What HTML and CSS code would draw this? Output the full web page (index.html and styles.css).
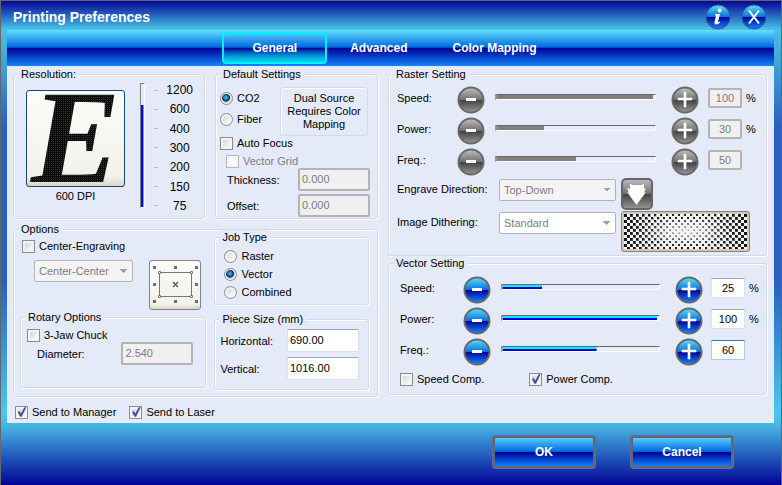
FILE: index.html
```html
<!DOCTYPE html>
<html lang="en">

<head>
    <meta charset="UTF-8">
    <meta name="viewport" content="width=device-width, initial-scale=1.0">
    <title>Printing Preferences</title>
    <link rel="stylesheet" href="styles.css">
</head>

<body>

    <header class="titlebar">
        <h1>Printing Preferences</h1>
        <button type="button" class="orb" aria-label="About">
            <svg width="26" height="26" viewBox="0 0 26 26">
                <use href="#orb-blue"/>
                <circle cx="14.600" cy="6.500" r="1.900" fill="#fff"/>
                <path d="M10 10h5l-2 7.500q-.2 1.300 1.500 0l.8.6q-1.500 2.400-3.700 2.400-2.700 0-2-2.900l1.400-5.500q.2-.9-1-.9z" fill="#fff"/>
            </svg>
        </button>
        <button type="button" class="orb" aria-label="Close">
            <svg width="26" height="26" viewBox="0 0 26 26">
                <use href="#orb-blue"/>
                <path d="M8 6.500l10 13M18 6.500l-10 13" stroke="#fff" stroke-width="2"/>
            </svg>
        </button>
    </header>

    <nav class="tabs">
        <button type="button" class="tab active">General</button>
        <button type="button" class="tab">Advanced</button>
        <button type="button" class="tab">Color Mapping</button>
    </nav>

    <main class="panel">
        <div class="columns">
            <div class="left">
                <div class="top-row">
                    <fieldset class="resolution">
                        <legend>Resolution:</legend>
                        <div class="preview">
                            <button type="button" class="preview-button" aria-label="Resolution preview">
                                <svg width="97" height="95" viewBox="0 0 97 95">
                                    <defs>
                                        <pattern id="dots" width="2" height="2" patternUnits="userSpaceOnUse">
                                            <rect width="2" height="2" fill="#0c0c0c"/>
                                            <rect width="1" height="1" fill="#343434"/>
                                        </pattern>
                                    </defs>
                                    <text class="preview-letter" x="4" y="91" fill="url(#dots)">E</text>
                                </svg>
                            </button>
                            <output for="dpi">600 DPI</output>
                        </div>
                        <input type="range" id="dpi" class="vertical" aria-label="Resolution" min="0" max="6" value="5" style="--fill: 83%">
                        <ul class="scale">
                            <li>1200</li>
                            <li>600</li>
                            <li>400</li>
                            <li>300</li>
                            <li>200</li>
                            <li>150</li>
                            <li>75</li>
                        </ul>
                    </fieldset>

                    <fieldset class="defaults">
                        <legend>Default Settings</legend>
                        <div class="source">
                            <div class="source-options">
                                <label><input type="radio" name="source" checked>CO2</label>
                                <label><input type="radio" name="source">Fiber</label>
                            </div>
                            <p class="notice">Dual Source Requires Color Mapping</p>
                        </div>
                        <label><input type="checkbox">Auto Focus</label>
                        <label class="sub disabled"><input type="checkbox" disabled>Vector Grid</label>
                        <div class="field">
                            <label for="thickness">Thickness:</label>
                            <input type="text" id="thickness" value="0.000" disabled>
                        </div>
                        <div class="field">
                            <label for="offset">Offset:</label>
                            <input type="text" id="offset" value="0.000" disabled>
                        </div>
                    </fieldset>
                </div>

                <fieldset class="options">
                    <legend>Options</legend>
                    <div class="options-left">
                        <label class="centering"><input type="checkbox">Center-Engraving</label>
                        <div class="position">
                            <select aria-label="Center position" disabled>
                                <option>Center-Center</option>
                            </select>
                            <button type="button" class="anchor" aria-label="Anchor point">
                                <svg width="48" height="46" viewBox="0 0 48 46">
                                    <path d="M2 4h3v3H2zM23 4h3v3h-3zM44 4h3v3h-3zM2 21h3v3H2zM44 21h3v3h-3zM2 38h3v3H2zM23 38h3v3h-3zM44 38h3v3h-3z" fill="#707070"/>
                                    <path d="M8.500 10.500h32v24h-32z" fill="none" stroke="#777"/>
                                    <path d="M7.500 9.500h2v2h-2zM39.500 9.500h2v2h-2zM7.500 33.500h2v2h-2zM39.500 33.500h2v2h-2z" fill="#fff" stroke="#777"/>
                                    <path d="M22 20l5 5M27 20l-5 5" stroke="#555" stroke-width="1.300"/>
                                </svg>
                            </button>
                        </div>
                        <fieldset class="rotary">
                            <legend>Rotary Options</legend>
                            <label><input type="checkbox">3-Jaw Chuck</label>
                            <div class="field">
                                <label for="diameter">Diameter:</label>
                                <input type="text" id="diameter" value="2.540" disabled>
                            </div>
                        </fieldset>
                    </div>
                    <div class="options-right">
                        <fieldset class="job">
                            <legend>Job Type</legend>
                            <label><input type="radio" name="job">Raster</label>
                            <label><input type="radio" name="job" checked>Vector</label>
                            <label><input type="radio" name="job">Combined</label>
                        </fieldset>
                        <fieldset class="piece">
                            <legend>Piece Size (mm)</legend>
                            <div class="field">
                                <label for="horizontal">Horizontal:</label>
                                <input type="text" id="horizontal" value="690.00">
                            </div>
                            <div class="field">
                                <label for="vertical">Vertical:</label>
                                <input type="text" id="vertical" value="1016.00">
                            </div>
                        </fieldset>
                    </div>
                </fieldset>
            </div>

            <div class="right">
                <fieldset class="raster">
                    <legend>Raster Setting</legend>
                    <div class="level">
                        <label for="raster-speed">Speed:</label>
                        <button type="button" class="orb" aria-label="Decrease raster speed"><svg width="28" height="28"><use href="#minus-gray"/></svg></button>
                        <input type="range" aria-label="Raster speed" value="100" disabled style="--fill: 99%">
                        <button type="button" class="orb" aria-label="Increase raster speed"><svg width="28" height="28"><use href="#plus-gray"/></svg></button>
                        <input type="text" id="raster-speed" value="100" disabled>
                        <span>%</span>
                    </div>
                    <div class="level">
                        <label for="raster-power">Power:</label>
                        <button type="button" class="orb" aria-label="Decrease raster power"><svg width="28" height="28"><use href="#minus-gray"/></svg></button>
                        <input type="range" aria-label="Raster power" value="30" disabled style="--fill: 30%">
                        <button type="button" class="orb" aria-label="Increase raster power"><svg width="28" height="28"><use href="#plus-gray"/></svg></button>
                        <input type="text" id="raster-power" value="30" disabled>
                        <span>%</span>
                    </div>
                    <div class="level">
                        <label for="raster-freq">Freq.:</label>
                        <button type="button" class="orb" aria-label="Decrease raster frequency"><svg width="28" height="28"><use href="#minus-gray"/></svg></button>
                        <input type="range" aria-label="Raster frequency" value="50" disabled style="--fill: 50%">
                        <button type="button" class="orb" aria-label="Increase raster frequency"><svg width="28" height="28"><use href="#plus-gray"/></svg></button>
                        <input type="text" id="raster-freq" value="50" disabled>
                    </div>
                    <div class="choice">
                        <label for="direction">Engrave Direction:</label>
                        <select id="direction" disabled>
                            <option>Top-Down</option>
                        </select>
                        <button type="button" class="arrow" aria-label="Engrave downwards">
                            <svg width="32" height="32" viewBox="0 0 32 32">
                                <rect x="1" y="1" width="30" height="30" rx="4" fill="url(#gray)" stroke="#666" stroke-width="2"/>
                                <path d="M9 6l3 1h8l3-1v5l2-1-2 5 2-1-9.500 13L6 14l2 1-2-5 3 1z" fill="#fff"/>
                            </svg>
                        </button>
                    </div>
                    <div class="choice">
                        <label for="dithering">Image Dithering:</label>
                        <select id="dithering" class="open" disabled>
                            <option>Standard</option>
                        </select>
                        <button type="button" class="dither" aria-label="Dithering preview">
                            <svg width="123" height="35" viewBox="0 0 123 35">
                                <defs>
                                    <pattern id="small" width="6" height="6" patternUnits="userSpaceOnUse">
                                        <path d="M1 1h1v1H1zM4 4h1v1H4z" fill="#444"/>
                                    </pattern>
                                    <pattern id="medium" width="6" height="6" patternUnits="userSpaceOnUse">
                                        <path d="M0 0h2v2H0zM3 3h2v2H3z" fill="#222"/>
                                    </pattern>
                                    <pattern id="large" width="6" height="6" patternUnits="userSpaceOnUse">
                                        <path d="M0 0h3v3H0zM3 3h3v3H3z" fill="#111"/>
                                    </pattern>
                                    <radialGradient id="fade" cx=".5" cy=".5" r=".5">
                                        <stop offset="0" stop-color="#000"/>
                                        <stop offset=".8" stop-color="#fff"/>
                                    </radialGradient>
                                    <linearGradient id="edges">
                                        <stop offset="0" stop-color="#fff"/>
                                        <stop offset=".35" stop-color="#000"/>
                                        <stop offset=".65" stop-color="#000"/>
                                        <stop offset="1" stop-color="#fff"/>
                                    </linearGradient>
                                    <mask id="fade-mask"><rect width="123" height="35" fill="url(#fade)"/></mask>
                                    <mask id="edge-mask"><rect width="123" height="35" fill="url(#edges)"/></mask>
                                </defs>
                                <rect width="123" height="35" fill="#f2f2f2"/>
                                <rect width="123" height="35" fill="url(#small)" opacity=".5"/>
                                <rect width="123" height="35" fill="url(#medium)" mask="url(#fade-mask)"/>
                                <rect width="123" height="35" fill="url(#large)" mask="url(#edge-mask)"/>
                            </svg>
                        </button>
                    </div>
                </fieldset>

                <fieldset class="vector">
                    <legend>Vector Setting</legend>
                    <div class="level">
                        <label for="vector-speed">Speed:</label>
                        <button type="button" class="orb" aria-label="Decrease vector speed"><svg width="28" height="28"><use href="#minus-blue"/></svg></button>
                        <input type="range" aria-label="Vector speed" value="25" style="--fill: 25%">
                        <button type="button" class="orb" aria-label="Increase vector speed"><svg width="28" height="28"><use href="#plus-blue"/></svg></button>
                        <input type="text" id="vector-speed" value="25">
                        <span>%</span>
                    </div>
                    <div class="level">
                        <label for="vector-power">Power:</label>
                        <button type="button" class="orb" aria-label="Decrease vector power"><svg width="28" height="28"><use href="#minus-blue"/></svg></button>
                        <input type="range" aria-label="Vector power" value="100" style="--fill: 99%">
                        <button type="button" class="orb" aria-label="Increase vector power"><svg width="28" height="28"><use href="#plus-blue"/></svg></button>
                        <input type="text" id="vector-power" value="100">
                        <span>%</span>
                    </div>
                    <div class="level">
                        <label for="vector-freq">Freq.:</label>
                        <button type="button" class="orb" aria-label="Decrease vector frequency"><svg width="28" height="28"><use href="#minus-blue"/></svg></button>
                        <input type="range" aria-label="Vector frequency" value="60" style="--fill: 60%">
                        <button type="button" class="orb" aria-label="Increase vector frequency"><svg width="28" height="28"><use href="#plus-blue"/></svg></button>
                        <input type="text" id="vector-freq" class="current" value="60">
                    </div>
                    <div class="comp">
                        <label><input type="checkbox">Speed Comp.</label>
                        <label><input type="checkbox" checked>Power Comp.</label>
                    </div>
                </fieldset>
            </div>
        </div>

        <div class="send">
            <label><input type="checkbox" checked>Send to Manager</label>
            <label><input type="checkbox" checked>Send to Laser</label>
        </div>
    </main>

    <footer class="actions">
        <button type="button" class="action">OK</button>
        <button type="button" class="action">Cancel</button>
    </footer>

    <!-- shared button shapes -->
    <svg class="shapes" width="0" height="0" aria-hidden="true">
        <defs>
            <linearGradient id="blue" x1="0" y1="0" x2="0" y2="1">
                <stop offset="0" stop-color="#5ce0f4"/>
                <stop offset=".49" stop-color="#0870e0"/>
                <stop offset=".5" stop-color="#000098"/>
                <stop offset="1" stop-color="#1488ff"/>
            </linearGradient>
            <linearGradient id="gray" x1="0" y1="0" x2="0" y2="1">
                <stop offset="0" stop-color="#c0c0c0"/>
                <stop offset=".49" stop-color="#707070"/>
                <stop offset=".5" stop-color="#404040"/>
                <stop offset="1" stop-color="#989898"/>
            </linearGradient>
            <g id="orb-blue">
                <circle cx="13" cy="13" r="12" fill="url(#blue)" stroke="#40548c"/>
            </g>
            <g id="round-blue">
                <circle cx="14" cy="14" r="12.500" fill="url(#blue)" stroke="#686868" stroke-width="2"/>
            </g>
            <g id="round-gray">
                <circle cx="14" cy="14" r="12.500" fill="url(#gray)" stroke="#686868" stroke-width="2"/>
            </g>
            <path id="minus" d="M9 12h10v3H9z" fill="#fff"/>
            <path id="plus" d="M7 12h6V6h2v6h6v2h-6v7h-2v-7H7z" fill="#fff" stroke="#fff" stroke-width=".6"/>
            <g id="minus-blue"><use href="#round-blue"/><use href="#minus"/></g>
            <g id="plus-blue"><use href="#round-blue"/><use href="#plus"/></g>
            <g id="minus-gray"><use href="#round-gray"/><use href="#minus"/></g>
            <g id="plus-gray"><use href="#round-gray"/><use href="#plus"/></g>
        </defs>
    </svg>

</body>

</html>
```

FILE: styles.css
```css
* {
    box-sizing: border-box;
}

body {
    margin: 0;
    min-height: 100vh;
    display: flex;
    flex-direction: column;
    border: 1px solid #666;
    background: linear-gradient(#000094 0%, #48c0e6 6%, #3fa4d8 13%, #2860c0 26%, #2860c0 58%, #4ac8ec 85%, #44b0e0 88%, #000094 100%);
    font-family: "Liberation Sans", Arial, sans-serif;
    font-size: 11px;
    line-height: 14px;
    color: #000;
}

button,
input,
select {
    font: inherit;
    color: inherit;
    margin: 0;
}

button {
    padding: 0;
    border: none;
    background: none;
    cursor: pointer;
}

svg {
    display: block;
}

.shapes {
    position: absolute;
}

/* title and tabs */

.titlebar {
    height: 29px;
    display: flex;
    align-items: center;
    gap: 10px;
    padding: 2px 14px 0 12px;
}

.titlebar h1 {
    flex: 1;
    margin: 0;
    font-size: 14px;
    font-weight: bold;
    color: #fff;
}

.tabs {
    height: 36px;
    display: flex;
    justify-content: center;
    align-items: flex-start;
    gap: 1px;
    margin: 0 7px 0 6px;
    padding-top: 2px;
    background: linear-gradient(#64e0ff, #0068e0 48%, #000094 50%, #0a50d0 80%, #1484ff);
}

.tab {
    height: 32px;
    padding: 0 20px;
    border: 2px solid transparent;
    border-radius: 4px;
    font-size: 12px;
    font-weight: bold;
    color: #fff;
}

.tab.active {
    padding: 0 28px;
    border-color: #00f0ff;
    background: linear-gradient(#64e0ff00 50%, #00d8e8);
}

/* panel */

.panel {
    flex: 1;
    margin: 0 7px 0 6px;
    padding: 1px 7px 0 6px;
    background: #e4eaf7;
}

.columns {
    display: grid;
    grid-template-columns: 365fr 379fr;
    gap: 10px;
}

.left {
    display: flex;
    flex-direction: column;
    gap: 3px;
}

.top-row {
    display: grid;
    grid-template-columns: 192fr 163fr;
    gap: 10px;
}

fieldset {
    --pad: 6px;
    min-width: 0;
    margin: 0;
    padding: 0 0 0 var(--pad);
    border: 1px solid #d0dce2;
    border-radius: 3px;
    box-shadow: 1px 1px 0 #fff, inset 1px 1px 0 #fff;
}

/* keeps every legend at the same distance from its frame */
legend {
    margin-left: calc(4px - var(--pad));
    padding: 0 3px;
    background: #e4eaf7;
}

fieldset label {
    white-space: nowrap;
}

label:has(input) {
    display: flex;
    align-items: center;
    gap: 4px;
}

.disabled {
    color: #7d7d7d;
}

input[type="text"] {
    width: 72px;
    height: 23px;
    padding: 0 2px 2px;
    border: 1px solid #dce0e8;
    border-top-color: #a4a8b0;
    background: #fff;
}

input[type="text"]:disabled {
    border: 2px solid #b4b4b4;
    border-radius: 2px;
    background: #f0f0f0;
    color: #7d7d7d;
}

input[type="checkbox"],
input[type="radio"] {
    appearance: none;
    flex: none;
    width: 13px;
    height: 13px;
    border: 1px solid #8a8c8e;
    background: linear-gradient(135deg, #c8ccd2, #fafafa 80%);
    box-shadow: inset 0 0 0 2px #f4f4f4;
}

input[type="checkbox"]:disabled {
    border-color: #b8b8b8;
    background: #f8f8f8;
}

input[type="checkbox"]:checked::after {
    content: "";
    display: block;
    height: 11px;
    background: #40549c;
    clip-path: polygon(15% 50%, 32% 42%, 45% 64%, 76% 6%, 94% 6%, 52% 94%, 38% 94%);
}

input[type="radio"] {
    border-radius: 50%;
}

input[type="radio"]:checked {
    background: radial-gradient(circle at 45% 42%, #58d0f4 0, #1070b0 25%, #0c3050 42%, #d0d4d8 50%);
    box-shadow: inset 0 0 0 1px #f4f4f4;
}

select {
    appearance: none;
    height: 22px;
    padding: 0 4px;
    border: 1px solid #b0b4b8;
    border-radius: 2px;
    background:
        linear-gradient(to bottom right, #a0a0a0 50%, transparent 50%) right 4px center / 4px 4px no-repeat,
        linear-gradient(to bottom left, #a0a0a0 50%, transparent 50%) right 8px center / 4px 4px no-repeat,
        #f4f4f4;
    color: #7d7d7d;
}

select:disabled {
    opacity: 1;
}

/* sliders */

input[type="range"] {
    appearance: none;
    min-width: 0;
    height: 6px;
    border: 1px solid #fff;
    border-top-color: #686868;
    border-left: 2px solid #989898;
    background: linear-gradient(#00f0ff 50%, #0000e0 50%) left / var(--fill) 100% no-repeat, #e8ecf4;
}

input[type="range"]:disabled {
    background: linear-gradient(#808080, #808080) left / var(--fill) 100% no-repeat, #e8ecf4;
}

input[type="range"].vertical {
    writing-mode: vertical-lr;
    direction: rtl;
    width: 6px;
    height: 125px;
    border: 1px solid #fff;
    border-left-color: #808080;
    border-top-color: #808080;
    background: linear-gradient(to right, #0000ff 75%, #8c8cff 75%) bottom / 100% var(--fill) no-repeat, #ececf0;
}

input[type="range"]::-webkit-slider-thumb {
    appearance: none;
    width: 1px;
    height: 1px;
    opacity: 0;
}

/* resolution */

.resolution {
    --pad: 12px;
    display: flex;
    align-items: flex-start;
    padding-top: 2px;
    padding-right: 11px;
}

.preview {
    padding-top: 7px;
    display: flex;
    flex-direction: column;
    align-items: center;
    gap: 2px;
}

.preview-button {
    border: 1px solid #104878;
    border-radius: 3px;
    background: linear-gradient(#fcfcfa, #f2f2ea 90%, #dcd4c8);
}

.preview-letter {
    font: italic bold 134px/1 "Liberation Serif", serif;
}

.resolution .vertical {
    margin-left: 15px;
}

.scale {
    flex: 1;
    height: 130px;
    margin: 0 0 0 9px;
    padding: 0;
    display: flex;
    flex-direction: column;
    justify-content: space-between;
    list-style: none;
    font-size: 12px;
    text-align: center;
}

.scale li {
    display: grid;
    grid-template-columns: 12px 1fr;
    align-items: center;
}

.scale li::before {
    content: "";
    width: 4px;
    height: 1px;
    background: #b8bcc0;
}

/* default settings */

.defaults {
    --pad: 4px;
    padding-top: 6px;
    padding-right: 7px;
    padding-bottom: 1px;
}

.source {
    display: flex;
    justify-content: space-between;
}

.source-options {
    display: flex;
    flex-direction: column;
    gap: 7px;
    padding-top: 4px;
}

.notice {
    width: 88px;
    margin: 0 2px 0 0;
    padding: 4px 3px;
    border: 1px solid #d0dce2;
    border-radius: 3px;
    box-shadow: inset 1px 1px 0 #fff;
    line-height: 13px;
    text-align: center;
}

.sub {
    margin: 4px 0 0 6px;
}

.field {
    display: flex;
    justify-content: space-between;
    align-items: center;
    padding-left: 7px;
}

.defaults .field {
    margin-bottom: 3px;
}

.defaults .field:last-child {
    margin-bottom: 0;
}

/* options */

.options {
    display: grid;
    grid-template-columns: 187fr 155fr;
    gap: 8px;
    padding-right: 8px;
    padding-bottom: 6px;
}

.centering {
    margin: 3px 0 0 2px;
}

.position {
    display: flex;
    align-items: flex-start;
    justify-content: space-between;
    padding: 7px 5px 0 14px;
}

.position select {
    width: 99px;
}

.anchor {
    padding: 1px;
    border: 1px solid #808488;
    border-radius: 3px;
    background: linear-gradient(#fcfcfa, #f2f2ea 90%, #dcd4c8);
}

.rotary {
    height: 78px;
    padding-top: 4px;
    padding-right: 12px;
}

.rotary .field {
    padding-left: 10px;
}

/* Job Type starts right below the frame of Options */
.options-right {
    margin-top: -6px;
}

.job {
    --pad: 9px;
    height: 75px;
    margin-bottom: 7px;
    padding-top: 3px;
}

.job label {
    height: 18px;
}

.piece {
    --pad: 5px;
    height: 78px;
    padding-top: 3px;
    padding-right: 9px;
}

.piece .field {
    padding: 0;
    margin-bottom: 5px;
}

/* raster and vector */

.raster {
    --pad: 8px;
    --label: 60px;
    --value: 43px;
    padding-top: 3px;
    padding-right: 8px;
    padding-bottom: 3px;
}

.vector {
    --pad: 11px;
    --label: 63px;
    --value: 42px;
    padding-top: 4px;
    padding-right: 5px;
    padding-bottom: 8px;
}

.level {
    display: grid;
    grid-template-columns: var(--label) 28px minmax(0, 1fr) 28px var(--value) 16px;
    align-items: center;
    height: 31px;
}

.level label {
    padding-bottom: 4px;
}

.level span {
    padding: 0 0 4px 4px;
}

.level input[type="range"] {
    margin: 0 15px 6px 10px;
}

.level input[type="text"] {
    width: 34px;
    height: 20px;
    margin-bottom: 3px;
    padding: 0;
    justify-self: end;
    text-align: center;
}

.level input[type="text"].current {
    border-color: #a8cce8;
    border-top-color: #3078b0;
}

.choice {
    display: grid;
    grid-template-columns: 102px 117px auto;
    justify-content: start;
    align-items: start;
    margin-top: 1px;
}

.choice select {
    margin-top: 1px;
}

.choice label {
    padding-top: 4px;
}

.choice .open {
    background-color: #fff;
}

.arrow {
    margin-left: 5px;
}

.dither {
    margin-left: 5px;
    padding: 2px;
    border: 1px solid #888478;
    border-radius: 3px;
    background: #d0c8b8;
}

.comp {
    display: flex;
    gap: 45px;
    margin-top: 5px;
}

.send {
    display: flex;
    gap: 13px;
    padding: 8px 0 4px 2px;
}

/* footer */

.actions {
    height: 62px;
    display: flex;
    justify-content: flex-end;
    align-items: flex-start;
    gap: 34px;
    padding: 12px 47px 0 0;
}

.action {
    width: 104px;
    height: 34px;
    border: 3px solid #666;
    border-radius: 4px;
    outline: 1px solid #5c68b0;
    outline-offset: -1px;
    background: linear-gradient(#58ccff, #0068e0 48%, #000094 50%, #1080ff);
    font-size: 12px;
    font-weight: bold;
    color: #fff;
}
```
